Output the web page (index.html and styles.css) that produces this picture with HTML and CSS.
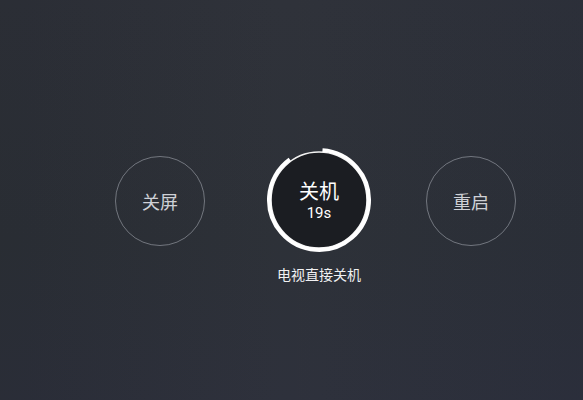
FILE: index.html
```html
<!DOCTYPE html>
<html lang="zh">
<head>
<meta charset="utf-8">
<link rel="stylesheet" href="styles.css">
</head>
<body>
<main class="screen">
  <div class="row">
    <div class="option side">关屏</div>
    <div class="center">
      <div class="ring">
        <svg class="ring-svg" width="106" height="106" viewBox="0 0 106 106">
          <circle cx="53" cy="53" r="48" fill="#1b1d22" stroke="#f2f2f2" stroke-width="1.6"/>
          <circle cx="53" cy="53" r="50" fill="none" stroke="#ffffff" stroke-width="4"
                  stroke-dasharray="279 35" transform="rotate(-86 53 53)"/>
        </svg>
        <div class="ring-text">
          <span class="ring-title">关机</span>
          <span class="ring-count">19s</span>
        </div>
      </div>
      <div class="label">电视直接关机</div>
    </div>
    <div class="option side right">重启</div>
  </div>
</main>
</body>
</html>
```

FILE: styles.css
```css
html, body {
  margin: 0;
  padding: 0;
}
body {
  width: 583px;
  height: 400px;
  overflow: hidden;
  background: #2b2e36;
  font-family: "Noto Sans CJK SC", "Noto Sans", Roboto, sans-serif;
}
.screen {
  width: 583px;
  height: 400px;
  box-sizing: border-box;
  padding-top: 148px;
  padding-left: 115px;
  background:
    linear-gradient(90deg, rgba(0,0,0,0.03) 0%, rgba(255,255,255,0.015) 50%, rgba(40,50,90,0.06) 100%),
    linear-gradient(180deg, #2c2f37 0%, #2a2e35 60%, #2b2e39 100%);
}
.row {
  display: flex;
  align-items: flex-start;
}
.option {
  width: 88px;
  height: 88px;
  border-radius: 50%;
  border: 1px solid rgba(200, 204, 212, 0.45);
  margin-top: 8px;
  display: flex;
  align-items: center;
  justify-content: center;
  color: #cfd1d6;
  font-size: 18px;
  letter-spacing: 0;
}
.center {
  margin-left: 61px;
  margin-right: 54px;
  width: 106px;
  display: flex;
  flex-direction: column;
  align-items: center;
}
.ring {
  position: relative;
  width: 106px;
  height: 106px;
  margin-top: -1px;
}
.ring-svg {
  display: block;
}
.ring-text {
  position: absolute;
  inset: 0;
  display: flex;
  flex-direction: column;
  align-items: center;
  justify-content: center;
  color: #ffffff;
  padding-top: 2px;
}
.ring-title {
  font-size: 20px;
  line-height: 22px;
}
.ring-count {
  font-family: Roboto, "Noto Sans", sans-serif;
  font-size: 15px;
  line-height: 18px;
  margin-top: 2px;
}
.label {
  margin-top: 12px;
  color: #f0f0f2;
  font-size: 14px;
  line-height: 18px;
  white-space: nowrap;
}
```
